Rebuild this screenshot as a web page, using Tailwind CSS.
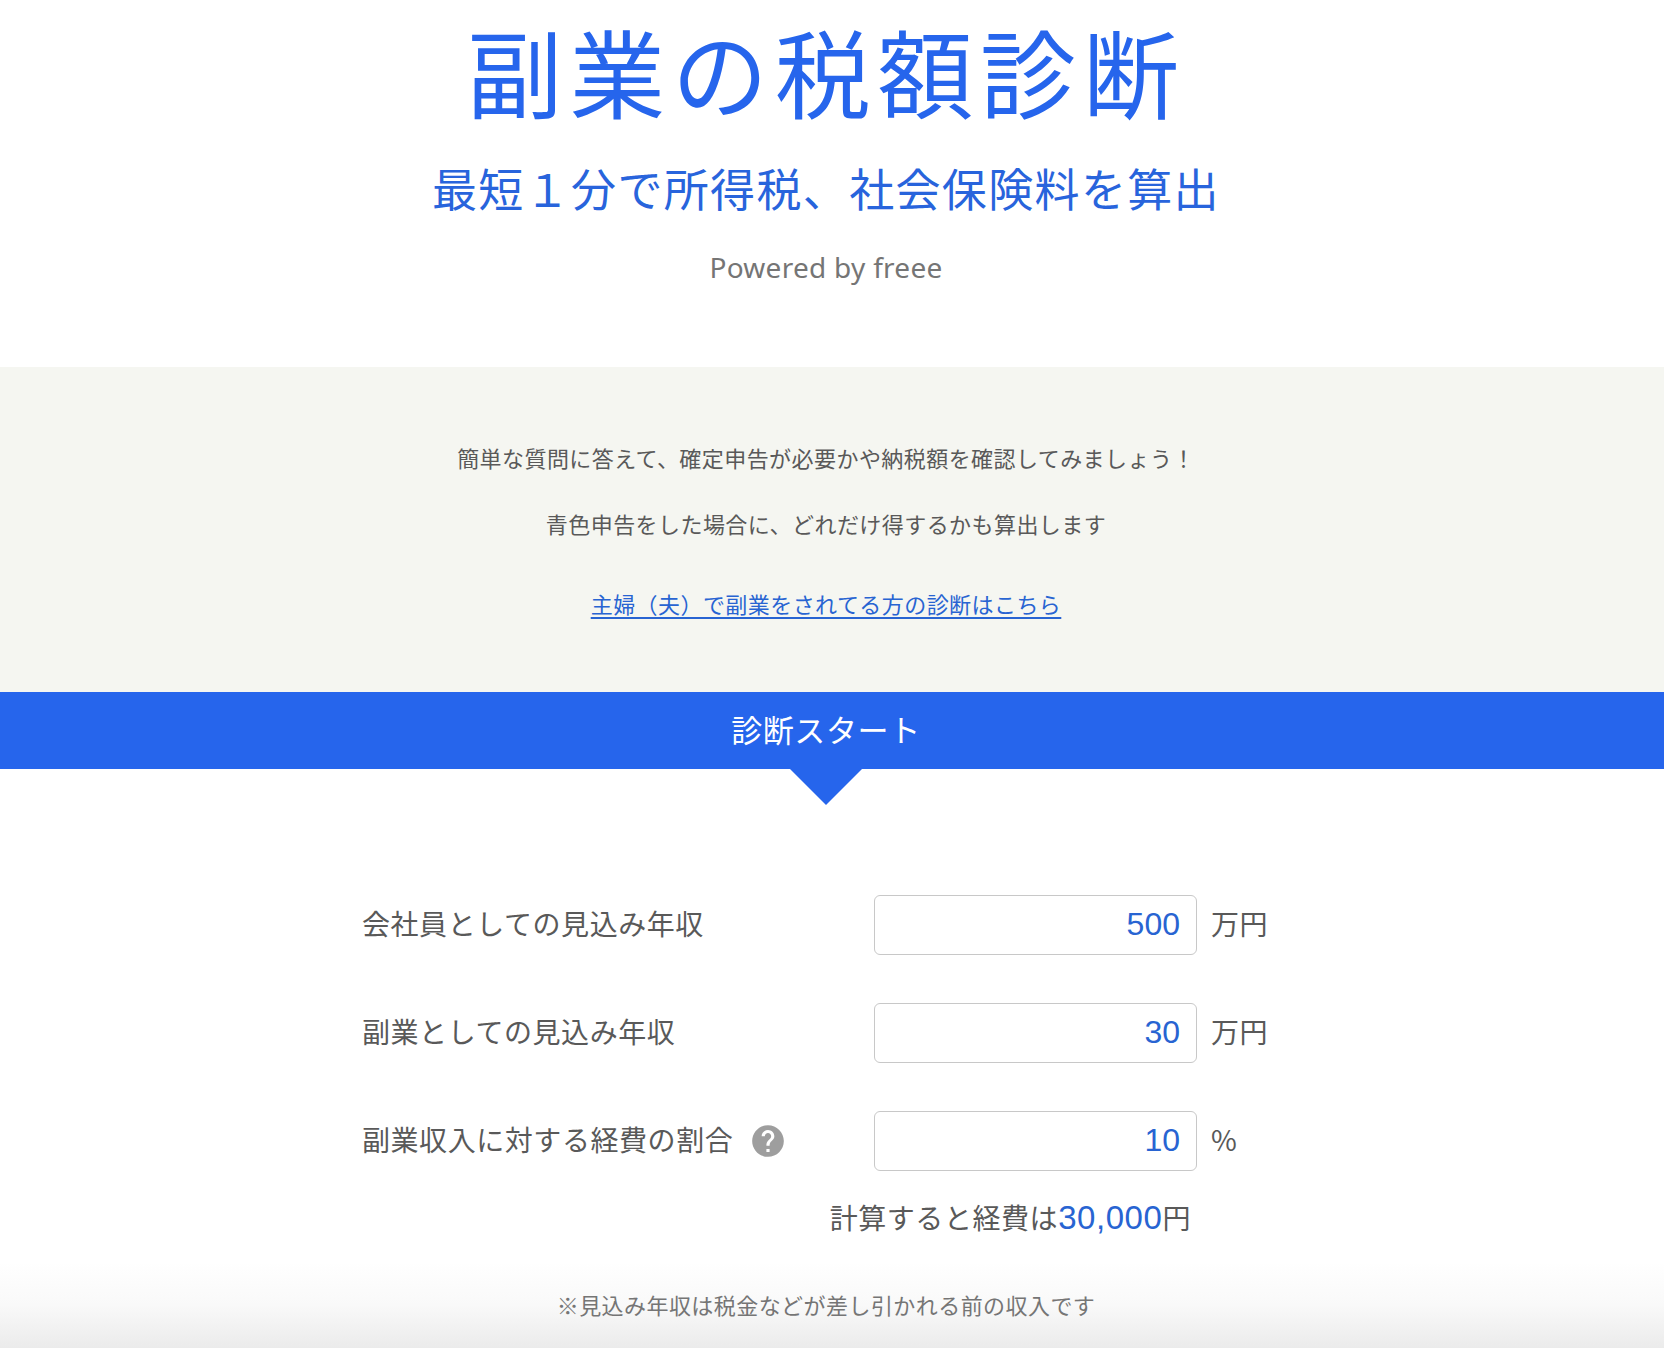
<!DOCTYPE html>
<html lang="ja">
  <head>
    <meta charset="UTF-8" />
    <meta name="viewport" content="width=device-width, initial-scale=1.0" />
    <title>副業の税額診断 | freee</title>
    <script src="https://cdn.jsdelivr.net/npm/@tailwindcss/browser@4"></script>
  </head>
  <body class="min-h-screen bg-white font-['Noto_Sans_CJK_JP',sans-serif] text-[#595959]">
    <header class="pt-[14px] pb-20 pr-3 text-center">
      <h1 class="text-[96px] leading-[112px] tracking-[0.07em] text-[#2665ec]">副業の税額診断</h1>
      <p class="mt-7 text-[45px] leading-[68px] tracking-[0.03em] text-[#2864dc]">最短１分で所得税、社会保険料を算出</p>
      <p class="mt-[25px] font-['Noto_Sans',sans-serif] text-[28px] leading-10 tracking-[0.01em] text-[#757575]">Powered by freee</p>
    </header>

    <section class="bg-[#f5f6f1] pt-[74px] pb-[73px] pr-3 text-center text-[22px] leading-8 tracking-[0.02em]">
      <p>簡単な質問に答えて、確定申告が必要かや納税額を確認してみましょう！</p>
      <p class="mt-[34px]">青色申告をした場合に、どれだけ得するかも算出します</p>
      <p class="mt-12">
        <a href="#" class="text-[#2864d2] underline decoration-2 underline-offset-4">主婦（夫）で副業をされてる方の診断はこちら</a>
      </p>
    </section>

    <main>
      <div class="bg-[#2665ec] pt-[14px] pb-[18px] pr-3 text-center">
        <h2 class="text-[31px] leading-[45px] tracking-[0.02em] text-white">診断スタート</h2>
      </div>
      <div class="flex justify-center pr-3">
        <svg class="h-9 w-[72px] fill-[#2665ec]" viewBox="0 0 72 36" aria-hidden="true"><path d="M0 0h72L36 36z" /></svg>
      </div>

      <form id="simulator" class="pt-[90px] pr-3 text-[28px] leading-10 tracking-[0.02em]">
        <div class="mx-auto flex max-w-[928px] flex-col gap-12">
          <div class="flex items-center">
            <label for="salary" class="flex-1 pb-1">会社員としての見込み年収</label>
            <div class="flex w-[416px] items-center gap-[14px]">
              <input
                id="salary"
                type="text"
                inputmode="numeric"
                value="500"
                class="h-[60px] w-[323px] rounded-md border border-[#c8c8c8] bg-white px-4 pb-0.5 text-right font-['Liberation_Sans',sans-serif] text-[32px] tracking-normal text-[#2864d2]" />
              <span class="pb-1">万円</span>
            </div>
          </div>

          <div class="flex items-center">
            <label for="sideIncome" class="flex-1 pb-1">副業としての見込み年収</label>
            <div class="flex w-[416px] items-center gap-[14px]">
              <input
                id="sideIncome"
                type="text"
                inputmode="numeric"
                value="30"
                class="h-[60px] w-[323px] rounded-md border border-[#c8c8c8] bg-white px-4 pb-0.5 text-right font-['Liberation_Sans',sans-serif] text-[32px] tracking-normal text-[#2864d2]" />
              <span class="pb-1">万円</span>
            </div>
          </div>

          <div class="flex items-center">
            <div class="flex flex-1 items-center gap-4">
              <label for="expenseRate" class="pb-1">副業収入に対する経費の割合</label>
              <button type="button" aria-label="経費の割合について" class="text-[#9e9e9e]">
                <svg class="size-[38px] fill-current" viewBox="0 0 24 24">
                  <path d="M12 2C6.48 2 2 6.48 2 12s4.48 10 10 10 10-4.48 10-10S17.52 2 12 2zm1 17h-2v-2h2v2zm2.07-7.75l-.9.92C13.45 12.9 13 13.5 13 15h-2v-.5c0-1.1.45-2.1 1.17-2.83l1.24-1.26c.37-.36.59-.86.59-1.41 0-1.1-.9-2-2-2s-2 .9-2 2H8c0-2.21 1.79-4 4-4s4 1.79 4 4c0 .88-.36 1.68-.93 2.25z" />
                </svg>
              </button>
            </div>
            <div class="flex w-[416px] items-center gap-[14px]">
              <input
                id="expenseRate"
                type="text"
                inputmode="numeric"
                value="10"
                class="h-[60px] w-[323px] rounded-md border border-[#c8c8c8] bg-white px-4 pb-0.5 text-right font-['Liberation_Sans',sans-serif] text-[32px] tracking-normal text-[#2864d2]" />
              <span class="pb-1">%</span>
            </div>
          </div>
        </div>

        <p class="mx-auto mt-[26px] max-w-[928px] pr-[99px] text-right">計算すると経費は<output id="expense" for="sideIncome expenseRate" class="font-['Liberation_Sans',sans-serif] text-[33px] text-[#2864d2]">30,000</output>円</p>
      </form>
    </main>

    <footer class="mt-6 bg-linear-to-b from-white via-[#f9f9f9] to-[#ebebeb] pt-[26px] pb-7 pr-3 text-center text-[22px] leading-8 tracking-[0.02em] text-[#757575]">
      <p>※見込み年収は税金などが差し引かれる前の収入です</p>
    </footer>

    <script>
      const sideIncome = document.getElementById('sideIncome');
      const expenseRate = document.getElementById('expenseRate');

      function updateExpense() {
        // 万円 × % = 100円単位
        const yen = Number(sideIncome.value) * Number(expenseRate.value) * 100;
        document.getElementById('expense').textContent = isNaN(yen) ? '0' : yen.toLocaleString('ja-JP');
      }

      document.getElementById('simulator').addEventListener('input', updateExpense);
    </script>
  </body>
</html>
